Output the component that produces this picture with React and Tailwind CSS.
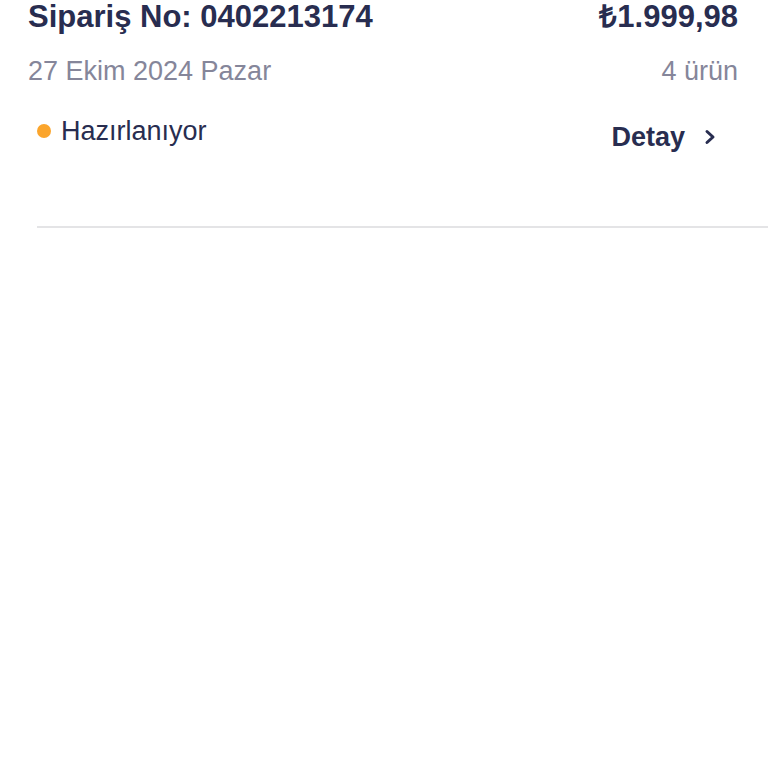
export default function App() {
  return (
    <div className="min-h-screen bg-white" style={{ fontFamily: '"Liberation Sans", Arial, sans-serif' }}>
      <div className="pl-[28px] pr-[30px]">
        <div className="flex items-start justify-between">
          <h1 className="text-[31px] leading-[34px] font-bold text-[#282d50]">Sipariş No: 0402213174</h1>
          <div className="text-[31px] leading-[34px] font-bold text-[#282d50]">₺1.999,98</div>
        </div>
        <div className="mt-[21px] flex items-center justify-between text-[27px] leading-[32px] text-[#85869a]">
          <span>27 Ekim 2024 Pazar</span>
          <span>4 ürün</span>
        </div>
        <div className="mt-[28px] flex items-start justify-between">
          <div className="flex items-center gap-[10px] pl-[9px]">
            <span className="h-[14px] w-[14px] rounded-full bg-[#fba52c]" />
            <span className="text-[27px] leading-[32px] text-[#282d50]">Hazırlanıyor</span>
          </div>
          <button className="mr-[22px] mt-[6px] flex items-center gap-[19px] text-[27px] font-bold leading-[32px] text-[#282d50]">
            Detay
            <svg width="12" height="16" viewBox="0 0 12 16" fill="none">
              <path d="M3 2.5 L9 8 L3 13.5" stroke="#282d50" strokeWidth="3" strokeLinecap="round" strokeLinejoin="round" />
            </svg>
          </button>
        </div>
      </div>
      <div className="ml-[37px] mt-[73px] h-[2px] bg-[#e4e4e6]" />
    </div>
  )
}
